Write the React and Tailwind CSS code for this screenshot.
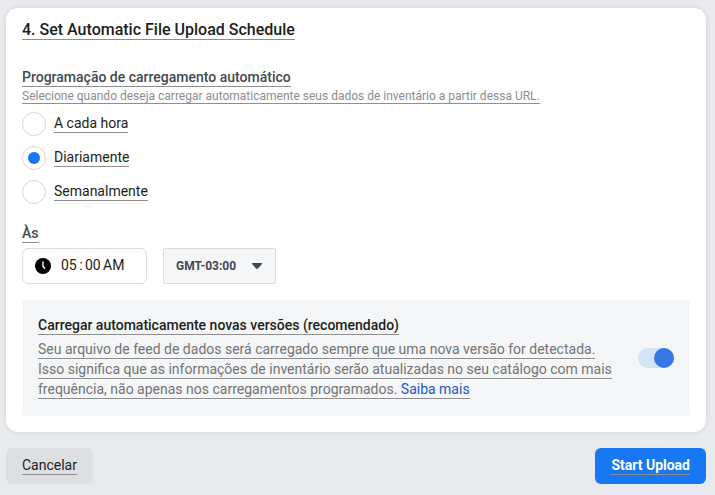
import React, { useState } from 'react';

const frequencies = [
  { id: 'hourly', label: 'A cada hora' },
  { id: 'daily', label: 'Diariamente' },
  { id: 'weekly', label: 'Semanalmente' },
];

const Underlined = ({ children }) => (
  <span className="border-b border-[#8f8f8f] pb-px">{children}</span>
);

const ClockIcon = () => (
  <svg viewBox="0 0 16 16" className="h-4 w-4" aria-hidden="true">
    <circle cx="8" cy="8" r="8" fill="#000" />
    <path d="M8 4v4.5l1.7 1.7" fill="none" stroke="#fff" strokeWidth="1.4" strokeLinecap="round" strokeLinejoin="round" />
  </svg>
);

const FrequencyOption = ({ id, label, checked, onChange }) => (
  <label htmlFor={id} className="flex items-center gap-2">
    <input
      type="radio"
      id={id}
      name="frequency"
      checked={checked}
      onChange={onChange}
      className="grid h-6 w-6 appearance-none place-items-center rounded-full border border-[#d6d6d8] bg-white before:h-3 before:w-3 before:rounded-full checked:before:bg-[#1877f2]"
    />
    <span className="pb-0.5 text-[#1c1e21]">
      <Underlined>{label}</Underlined>
    </span>
  </label>
);

const TimeField = () => {
  const [hour, setHour] = useState('05');
  const [minute, setMinute] = useState('00');
  const [period, setPeriod] = useState('AM');

  return (
    <div className="flex h-9 w-[125px] items-center rounded-md border border-[#dadde1] bg-white pl-3 text-[#1c1e21]">
      <ClockIcon />
      <div className="ml-2.5 flex pb-0.5">
        <input
          type="text"
          aria-label="Hora"
          value={hour}
          onChange={(e) => setHour(e.target.value)}
          className="h-5 w-4 outline-none"
        />
        <span className="w-2 text-center">:</span>
        <input
          type="text"
          aria-label="Minuto"
          value={minute}
          onChange={(e) => setMinute(e.target.value)}
          className="h-5 w-4 outline-none"
        />
        <input
          type="text"
          aria-label="AM/PM"
          value={period}
          onChange={(e) => setPeriod(e.target.value)}
          className="ml-0.5 h-5 w-6 outline-none"
        />
      </div>
    </div>
  );
};

const TimezoneSelect = () => (
  <div className="relative">
    <select
      aria-label="Fuso horário"
      defaultValue="-3"
      className="h-9 w-[113px] appearance-none rounded-xs border border-[#dadde1] bg-[#f5f6f7] pl-3 text-xs font-bold text-[#444950]"
    >
      <option value="-3">GMT-03:00</option>
    </select>
    <svg viewBox="0 0 12 7" className="pointer-events-none absolute top-[15px] right-[13px] h-[7px] w-3" aria-hidden="true">
      <path d="M1.4 0h9.2q.8.2.3 1L7 5.6q-1 .9-2 0L1.1 1Q.6.2 1.4 0z" fill="#444950" />
    </svg>
  </div>
);

const App = () => {
  const [frequency, setFrequency] = useState('daily');
  const [autoUpload, setAutoUpload] = useState(true);

  return (
    <div className="min-h-screen bg-[#e9eaee] pt-2 pr-[9px] pb-[11px] pl-1.5 font-[Roboto,sans-serif] text-sm leading-5">
      <main className="rounded-xl bg-white px-4 pt-3 pb-4 shadow-[0_0_4px_rgba(0,0,0,0.12)]">
        <h1 className="text-base leading-5 font-medium text-[#1c1e21]">
          <span className="border-b border-[#8f8f8f]">4. Set Automatic File Upload Schedule</span>
        </h1>

        <h2 className="mt-7 leading-[18px] font-medium text-[#444950]">
          <Underlined>Programação de carregamento automático</Underlined>
        </h2>
        <p className="mt-0.5 text-xs text-[#8a8d91]">
          <span className="border-b border-[#8f8f8f]">
            Selecione quando deseja carregar automaticamente seus dados de inventário a partir dessa URL.
          </span>
        </p>

        <div className="mt-2 flex flex-col items-start gap-2.5">
          {frequencies.map((item) => (
            <FrequencyOption
              key={item.id}
              id={item.id}
              label={item.label}
              checked={frequency === item.id}
              onChange={() => setFrequency(item.id)}
            />
          ))}
        </div>

        <h2 className="mt-5 leading-[18px] font-medium text-[#444950]">
          <Underlined>Às</Underlined>
        </h2>
        <div className="mt-1.5 flex gap-4">
          <TimeField />
          <TimezoneSelect />
        </div>

        <section className="mt-4 flex items-center gap-5 rounded bg-[#f5f6f7] p-4">
          <div className="flex-1 pb-px">
            <label htmlFor="auto-upload" className="block leading-[18px] font-medium text-[#1c1e21]">
              <Underlined>Carregar automaticamente novas versões (recomendado)</Underlined>
            </label>
            <p className="mt-[5px] text-[#737373]">
              <Underlined>
                Seu arquivo de feed de dados será carregado sempre que uma nova versão for detectada. Isso significa que
                as informações de inventário serão atualizadas no seu catálogo com mais frequência, não apenas nos
                carregamentos programados.{' '}
              </Underlined>
              <a href="#" className="text-[#2457c5]">
                <Underlined>Saiba mais</Underlined>
              </a>
            </p>
          </div>
          <input
            type="checkbox"
            role="switch"
            id="auto-upload"
            checked={autoUpload}
            onChange={() => setAutoUpload(!autoUpload)}
            className="flex h-5 w-9 shrink-0 appearance-none rounded-full bg-[#d4e3f6] before:h-5 before:w-5 before:rounded-full before:bg-[#3578e5] checked:justify-end"
          />
        </section>
      </main>

      <footer className="mt-4 flex justify-between">
        <button type="button" className="h-9 rounded-md bg-[#dddfe3] px-4 pb-0.5 text-[#1c1e21]">
          <Underlined>Cancelar</Underlined>
        </button>
        <button type="button" className="h-9 rounded-md bg-[#1877f2] px-4 pb-0.5 font-bold text-white">
          <Underlined>Start Upload</Underlined>
        </button>
      </footer>
    </div>
  );
};

export default App;
